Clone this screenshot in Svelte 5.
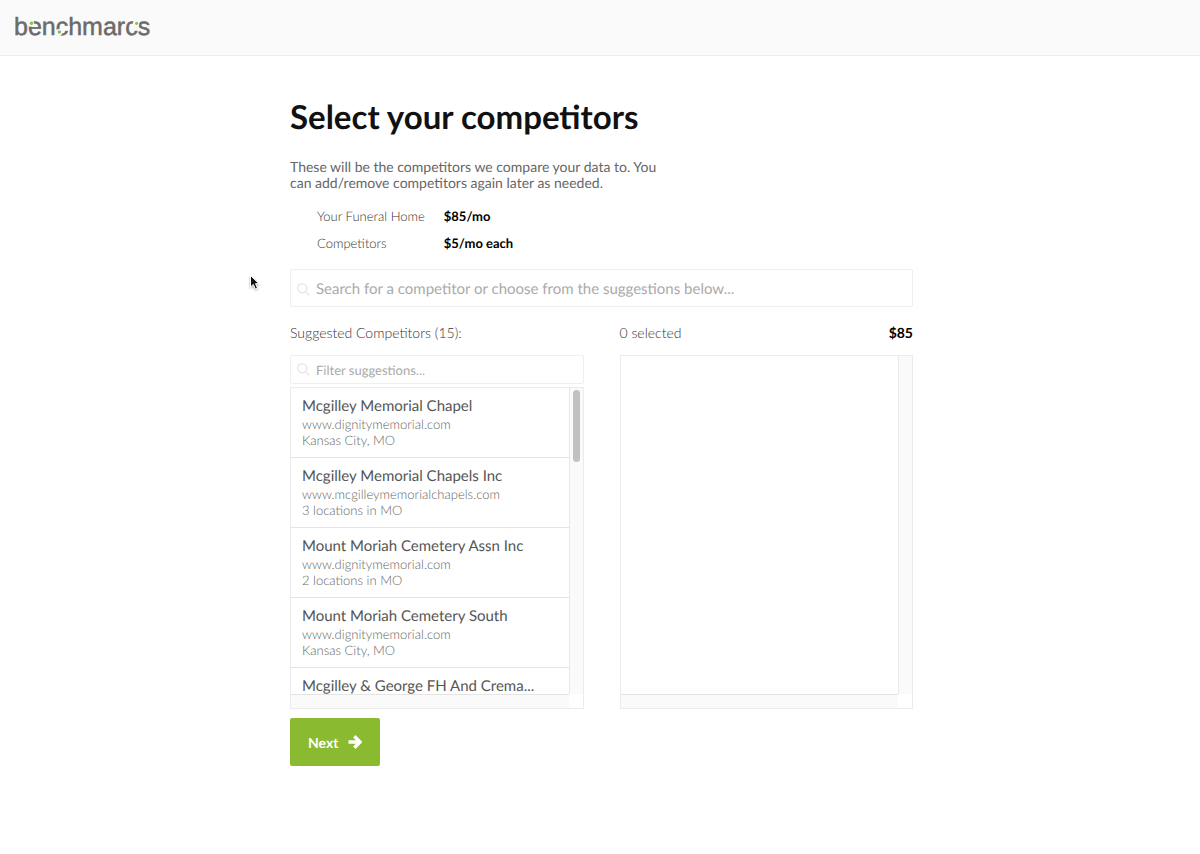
<script>
  const competitors = [
    { name: 'Mcgilley Memorial Chapel', site: 'www.dignitymemorial.com', place: 'Kansas City, MO' },
    { name: 'Mcgilley Memorial Chapels Inc', site: 'www.mcgilleymemorialchapels.com', place: '3 locations in MO' },
    { name: 'Mount Moriah Cemetery Assn Inc', site: 'www.dignitymemorial.com', place: '2 locations in MO' },
    { name: 'Mount Moriah Cemetery South', site: 'www.dignitymemorial.com', place: 'Kansas City, MO' },
    { name: 'Mcgilley & George FH And Crema...', site: '', place: '' }
  ];
</script>

{#snippet magnifier()}
  <svg class="magnifier" viewBox="0 0 14 14" aria-hidden="true">
    <circle cx="5.7" cy="5.7" r="4.9" />
    <path d="M9.3 9.3 L13.2 13.2" />
  </svg>
{/snippet}

<header>
  <svg class="logo" viewBox="0 0 140 28" role="img" aria-label="benchmarcs">
    <text x="0" y="24">benchmarcs</text>
    <g class="gaps">
      <circle cx="17" cy="12.6" r="3.2" />
      <circle cx="45" cy="21.3" r="3.4" />
      <path d="M50 17.5 L56 15 V18.8 L51 19.4 Z" />
      <circle cx="122" cy="12.8" r="3.2" />
    </g>
    <g class="dots">
      <circle cx="17.5" cy="12.3" r="1.8" />
      <circle cx="45.4" cy="21" r="1.8" />
      <circle cx="122.6" cy="12.3" r="1.6" />
    </g>
  </svg>
</header>

<main>
  <h1>Select your competitors</h1>
  <p class="intro">These will be the competitors we compare your data to. You can add/remove competitors again later as needed.</p>

  <dl class="prices">
    <dt>Your Funeral Home</dt>
    <dd>$85/mo</dd>
    <dt>Competitors</dt>
    <dd>$5/mo each</dd>
  </dl>

  <label class="field large">
    {@render magnifier()}
    <input type="text" aria-label="Search for a competitor" placeholder="Search for a competitor or choose from the suggestions below..." />
  </label>

  <div class="columns">
    <section>
      <h2>Suggested Competitors (15):</h2>
      <label class="field">
        {@render magnifier()}
        <input type="text" aria-label="Filter suggestions" placeholder="Filter suggestions..." />
      </label>
      <div class="pane suggestions">
        <ul>
          {#each competitors as c}
            <li>
              <strong>{c.name}</strong>
              <span>{c.site}</span>
              <span>{c.place}</span>
            </li>
          {/each}
        </ul>
        <div class="track vertical"><div class="thumb"></div></div>
        <div class="track horizontal"></div>
      </div>
    </section>

    <section>
      <div class="summary">
        <h2>0 selected</h2>
        <b>$85</b>
      </div>
      <div class="pane chosen">
        <ul></ul>
        <div class="track vertical"></div>
        <div class="track horizontal"></div>
      </div>
    </section>
  </div>

  <button type="button" class="next">
    Next
    <svg viewBox="0 0 14 14" aria-hidden="true">
      <path d="M0.500 7 H11.500 M6.300 1.300 L12 7 L6.300 12.700" />
    </svg>
  </button>
</main>

<svg class="cursor" viewBox="0 0 12 18" aria-hidden="true">
  <path d="M1.500 1.500 V13 L4.300 10.500 L6.300 15 L8.500 14 L6.500 9.700 H10 Z" />
</svg>

<style>
  :global(body) {
    margin: 0;
    background: #fff;
    font-family: Lato, "Liberation Sans", sans-serif;
    font-size: 14px;
    line-height: 16px;
    color: #555;
    text-rendering: geometricPrecision;
  }

  h1, h2, p, dl, dd, ul {
    margin: 0;
    padding: 0;
  }

  header {
    box-sizing: border-box;
    height: 56px;
    padding: 11px 14px;
    background: #fafafa;
    border-bottom: 1px solid #ebebeb;
  }

  .logo {
    display: block;
    width: 140px;
    height: 28px;
    overflow: visible;
  }

  .logo text {
    font: 25px "Liberation Sans", Arial, sans-serif;
    fill: #6b6b6b;
    stroke: #6b6b6b;
    stroke-width: 0.5;
  }

  .gaps {
    fill: #fafafa;
  }

  .dots {
    fill: #8cc152;
  }

  main {
    max-width: 623px;
    margin: 0 auto;
    padding: 39px 0 40px 3px;
  }

  h1 {
    font-size: 33px;
    line-height: 44px;
    font-weight: 700;
    color: #111;
  }

  .intro {
    max-width: 370px;
    margin-top: 20px;
    color: #666;
  }

  .prices {
    display: grid;
    grid-template-columns: max-content 1fr;
    gap: 11px 19px;
    margin: 17px 0 18px 27px;
    font-size: 13px;
  }

  dt {
    font-weight: 300;
    color: #333;
  }

  dd, .summary b {
    font-weight: 700;
    color: #000;
  }

  .field {
    box-sizing: border-box;
    display: flex;
    align-items: center;
    gap: 6px;
    height: 29px;
    padding: 0 6px;
    border: 1px solid #efefef;
    border-radius: 2px;
    font-size: 13px;
  }

  .field.large {
    height: 38px;
    padding-top: 2px;
    font-size: 15px;
  }

  .magnifier {
    flex: none;
    width: 13px;
    height: 13px;
    fill: none;
    stroke: #e8e8e8;
    stroke-width: 1.5;
  }

  input {
    flex: 1;
    min-width: 0;
    height: 24px;
    padding: 0;
    border: 0;
    outline: 0;
    background: none;
    font: inherit;
    color: #555;
    text-rendering: inherit;
  }

  input::placeholder {
    color: #aaa;
    opacity: 1;
  }

  .columns {
    display: grid;
    grid-template-columns: 1fr 1fr;
    gap: 36px;
    margin-top: 18px;
  }

  section {
    display: flex;
    flex-direction: column;
  }

  h2 {
    margin-bottom: 14px;
    font-size: 14px;
    line-height: 16px;
    font-weight: 300;
    color: #333;
  }

  .summary {
    display: flex;
    justify-content: space-between;
  }

  .pane {
    display: grid;
    grid-template-columns: 1fr 14px;
    grid-template-rows: 1fr 14px;
    border: 1px solid #ebebeb;
  }

  .suggestions {
    height: 320px;
    margin-top: 3px;
  }

  .chosen {
    flex: 1;
  }

  ul {
    overflow: hidden;
    list-style: none;
  }

  li {
    box-sizing: border-box;
    height: 70px;
    padding: 8px 11px;
    border-bottom: 1px solid #e4e4e4;
    font-size: 13px;
    font-weight: 300;
    color: #666;
  }

  li strong {
    display: block;
    font-size: 15px;
    line-height: 20px;
    font-weight: 400;
    color: #555;
  }

  li span {
    display: block;
  }

  .track {
    background: #fafafa;
  }

  .vertical {
    padding: 2px 3px;
    border-left: 1px solid #e8e8e8;
  }

  .horizontal {
    border-top: 1px solid #e4e4e4;
  }

  .thumb {
    height: 72px;
    border-radius: 4px;
    background: #c1c1c1;
  }

  .next {
    display: inline-flex;
    align-items: center;
    gap: 10px;
    height: 48px;
    margin-top: 9px;
    padding: 0 18px;
    border: 0;
    border-radius: 2px;
    background: #8aba30;
    font: 700 14px Lato, sans-serif;
    color: #fff;
    text-rendering: inherit;
  }

  .next svg {
    width: 14px;
    height: 14px;
    fill: none;
    stroke: #fff;
    stroke-width: 3.4;
  }

  .cursor {
    position: absolute;
    left: 249px;
    top: 274px;
    width: 12px;
    height: 18px;
    fill: #111;
    stroke: #fff;
    stroke-width: 1;
    filter: drop-shadow(0 1px 1px #0005);
  }
</style>
